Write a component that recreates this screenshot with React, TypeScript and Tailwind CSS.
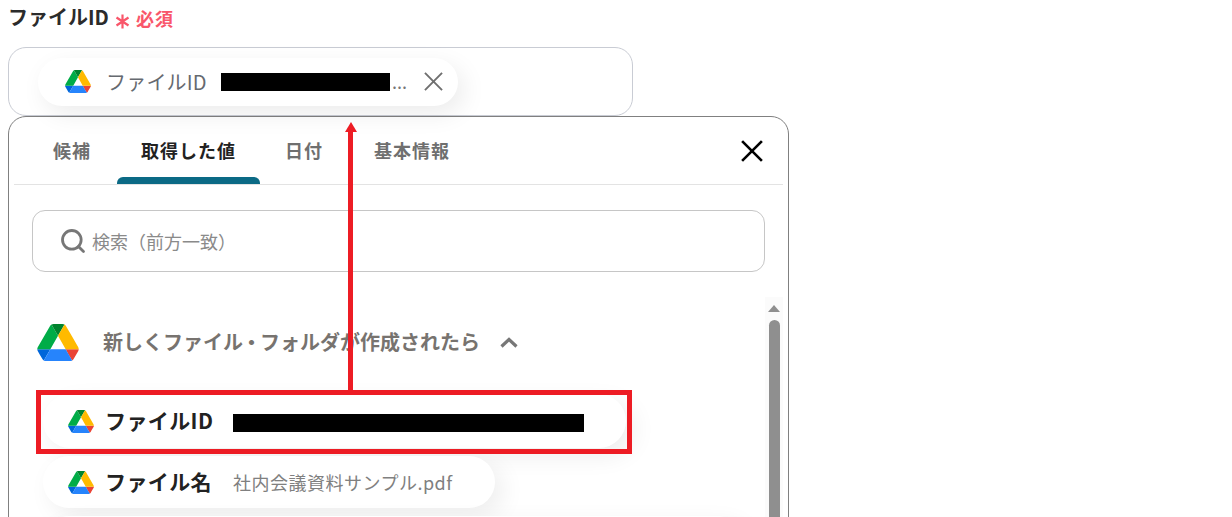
import React from "react";
import { Search } from "lucide-react";

const tabs = [
  { label: "候補", className: "w-[103px] pl-[39px] text-[#6f6f6f]" },
  { label: "取得した値", className: "w-[143px] justify-center text-[#222222]", active: true },
  { label: "日付", className: "w-[88px] pl-[25px] text-[#6f6f6f]" },
  { label: "基本情報", className: "w-[120px] pl-[26px] text-[#6f6f6f]" },
];

const DriveIcon = ({ className }: { className: string }) => (
  <svg viewBox="0 0 87.3 78" className={className}>
    <path d="m6.6 66.85 3.85 6.65c.8 1.4 1.95 2.5 3.3 3.3l13.75-23.8h-27.5c0 1.55.4 3.1 1.2 4.5z" fill="#0066da" />
    <path d="m43.65 25-13.75-23.8c-1.35.8-2.5 1.9-3.3 3.3l-25.4 44a9.06 9.06 0 0 0 -1.2 4.5h27.5z" fill="#00ac47" />
    <path d="m73.55 76.8c1.35-.8 2.5-1.9 3.3-3.3l1.6-2.75 7.65-13.25c.8-1.4 1.2-2.95 1.2-4.5h-27.502l5.852 11.5z" fill="#ea4335" />
    <path d="m43.65 25 13.75-23.8c-1.35-.8-2.9-1.2-4.5-1.2h-18.5c-1.6 0-3.15.45-4.5 1.2z" fill="#00832d" />
    <path d="m59.8 53h-32.3l-13.75 23.8c1.35.8 2.9 1.2 4.5 1.2h50.8c1.6 0 3.15-.45 4.5-1.2z" fill="#2684fc" />
    <path d="m73.4 26.5-12.7-22c-.8-1.4-1.95-2.5-3.3-3.3l-13.75 23.8 16.15 28h27.45c0-1.55-.4-3.1-1.2-4.5z" fill="#ffba00" />
  </svg>
);

const Cross = ({ className, width }: { className: string; width: number }) => (
  <svg viewBox="0 0 20 20" className={className} fill="none" stroke="currentColor" strokeWidth={width}>
    <path d="M1 1 19 19M19 1 1 19" />
  </svg>
);

const ValueChip = ({ name, children, className }: { name: string; children?: React.ReactNode; className: string }) => (
  <div className={`flex items-center rounded-[27px] bg-white pl-[25px] shadow-[8px_8px_24px_rgba(0,0,0,0.07)] ${className}`}>
    <DriveIcon className="h-[23px] w-[26px] shrink-0" />
    <span className="ml-[11px] w-[128px] shrink-0 text-[21px] font-bold tracking-[0.4px] text-[#222222]">{name}</span>
    {children}
  </div>
);

export default function App() {
  return (
    <div className="relative h-[517px] w-[1232px] overflow-hidden bg-white font-['Noto_Sans_CJK_JP','Noto_Sans',sans-serif]">
      <div className="flex h-[47px] items-start pl-[8px] pt-[2px]">
        <span className="text-[20px] leading-[30px] font-bold text-[#2b2b2b]">ファイルID</span>
        <svg viewBox="0 0 15 15" className="ml-[6px] mt-[12px] h-[15px] w-[15px] text-[#f9566a]" fill="none" stroke="currentColor" strokeWidth={2.2}>
          <path d="M7.5 0.5v14M1.5 3.5l12 8M13.5 3.5l-12 8" />
        </svg>
        <span className="ml-[6px] mt-[1px] text-[18px] tracking-[1px] leading-[30px] font-bold text-[#f9566a]">必須</span>
      </div>

      <div className="ml-[8px] flex h-[69px] w-[625px] items-center rounded-[18px] border border-[#c9ccd4] pl-[29px]">
        <div className="flex h-[48px] w-[420px] items-center rounded-[24px] bg-white pl-[27px] shadow-[6px_8px_24px_rgba(0,0,0,0.08)]">
          <DriveIcon className="h-[23px] w-[26px] shrink-0" />
          <span className="ml-[15px] w-[115px] shrink-0 text-[20px] tracking-[0.2px] text-[#666a70]">ファイルID</span>
          <div className="h-[18px] w-[169px] shrink-0 bg-black" />
          <span className="ml-[2px] w-[32px] shrink-0 text-[18px] text-[#777777]">...</span>
          <Cross className="h-[19px] w-[19px] shrink-0 text-[#6f6f6f]" width={2} />
        </div>
      </div>

      <div className="ml-[8px] h-[420px] w-[781px] rounded-t-[18px] border border-[#808080] bg-white">
        <div className="mx-[5px] flex h-[68px] items-stretch border-b border-[#e3e3e3]">
          {tabs.map((tab) => (
            <div key={tab.label} className={`relative flex items-center text-[18px] font-bold tracking-[1px] ${tab.className}`}>
              {tab.label}
              {tab.active && <div className="absolute bottom-0 left-0 h-[7px] w-[143px] rounded-t-[6px] bg-[#0b6a85]" />}
            </div>
          ))}
          <div className="flex flex-1 items-center justify-end pr-[20px]">
            <Cross className="h-[22px] w-[22px] text-black" width={2.4} />
          </div>
        </div>

        <div className="ml-[23px] mt-[25px] flex h-[62px] w-[733px] items-center rounded-[13px] border border-[#c6c6c6] pl-[26px]">
          <Search className="h-[28px] w-[28px] text-[#777777]" strokeWidth={2.4} />
          <span className="ml-[5px] text-[18px] text-[#8a8a8a]">検索（前方一致）</span>
        </div>

        <div className="mt-[25px] flex">
          <div className="w-[756px] pl-[28px]">
            <div className="flex h-[97px] items-center pb-[7px]">
              <DriveIcon className="h-[37px] w-[42px] shrink-0" />
              <span className="ml-[24px] text-[20px] font-bold text-[#77736f]">
                新しくファイル<span className="-mx-[1.5px]">・</span>フォルダが作成されたら
              </span>
              <svg viewBox="0 0 18 11" className="ml-[20px] h-[11px] w-[18px] text-[#777777]" fill="none" stroke="currentColor" strokeWidth={3.2}>
                <path d="M1.5 9.5 9 2.5l7.5 7" />
              </svg>
            </div>
            <div className="ml-[6px] flex flex-col gap-[8px]">
              <ValueChip name="ファイルID" className="h-[54px] w-[583px]">
                <div className="mt-[4px] h-[18px] w-[351px] bg-black" />
              </ValueChip>
              <ValueChip name="ファイル名" className="h-[52px] w-[452px]">
                <span className="text-[18px] tracking-[0.5px] text-[#808080]">社内会議資料サンプル.pdf</span>
              </ValueChip>
              <ValueChip name="" className="h-[52px] w-[700px]" />
            </div>
          </div>
          <div className="flex w-[18px] flex-col items-center bg-[#fbfbfb] pt-[8px]">
            <div className="h-0 w-0 border-x-[6px] border-b-[7px] border-x-transparent border-b-[#8f8f8f]" />
            <div className="mt-[8px] h-[220px] w-[11px] rounded-t-[6px] bg-[#8f8f8f]" />
          </div>
        </div>
      </div>

      {/* red annotation drawn on top of the screenshot */}
      <div className="absolute left-[36px] top-[390px] h-[64px] w-[596px] border-[5px] border-[#ed1c24]" />
      <div className="absolute left-[348px] top-[130px] h-[260px] w-[5px] bg-[#ed1c24]" />
      <div className="absolute left-[345px] top-[122px] h-0 w-0 border-x-[6px] border-b-[10px] border-x-transparent border-b-[#ed1c24]" />
    </div>
  );
}
